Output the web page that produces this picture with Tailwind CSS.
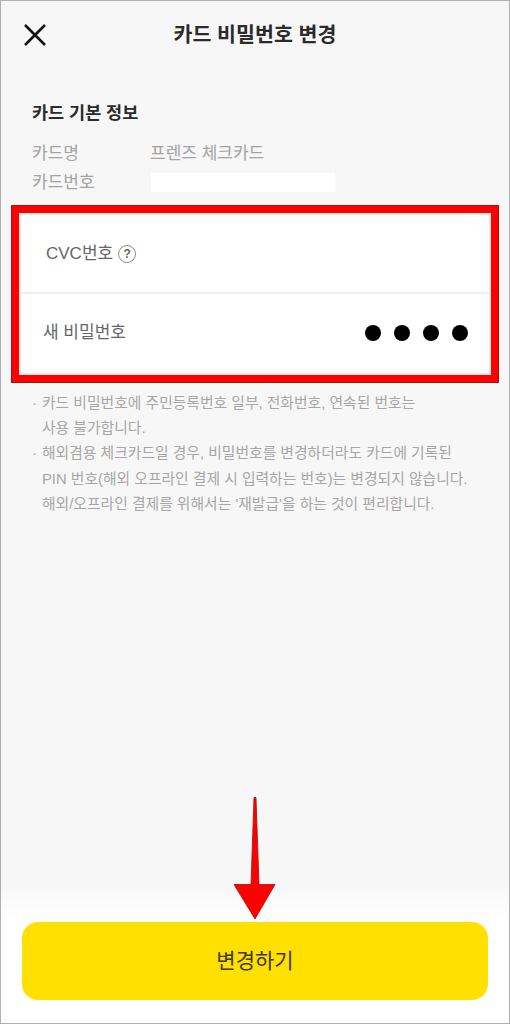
<!DOCTYPE html>
<html lang="ko">
<head>
    <meta charset="utf-8">
    <title>카드 비밀번호 변경</title>
    <script src="https://cdn.jsdelivr.net/npm/@tailwindcss/browser@4"></script>
</head>
<body class="m-0">
    <div class="relative w-[510px] h-[1024px] overflow-hidden flex flex-col border border-[#b0b0b0] bg-[#f7f7f7] font-['Liberation_Sans','Noto_Sans_CJK_KR',sans-serif]">
        <!-- Header -->
        <header class="relative h-[66px] shrink-0 flex items-center justify-center">
            <svg class="absolute left-[23px] top-[23px]" width="22" height="22" viewBox="0 0 22 22" fill="none" stroke="#111" stroke-width="2.6">
                <path d="M1 1L21 21M21 1L1 21"/>
            </svg>
            <h1 class="text-[20.6px] font-bold text-[#2b2b2b] leading-none pt-[2px]">카드 비밀번호 변경</h1>
        </header>

        <!-- Card info -->
        <section class="pl-[31px] pt-[32px] shrink-0">
            <h2 class="text-[17.5px] font-bold text-[#2b2b2b] leading-[28px]">카드 기본 정보</h2>
            <div class="mt-[12px] flex items-center h-[29px] text-[17px] text-[#a3a3a3]">
                <span class="w-[118px]">카드명</span>
                <span>프렌즈 체크카드</span>
            </div>
            <div class="flex items-center h-[29px] text-[17px] text-[#a3a3a3]">
                <span class="w-[119px]">카드번호</span>
                <span class="w-[184px] h-[19px] bg-white"></span>
            </div>
        </section>

        <!-- Inputs -->
        <section class="mx-[10px] mt-[8px] h-[178px] shrink-0 border-[8px] border-[#ff0000] outline outline-1 outline-[#b01010] -outline-offset-1 bg-white">
            <div class="h-full border-2 border-[#e9e9ec] flex flex-col">
                <div class="h-[79px] border-b-2 border-[#f0f0f0] flex items-center pl-[25px] pt-[1px] text-[17px] text-[#666]">
                    <span>CVC번호</span>
                    <span class="ml-[5px] w-[18px] h-[18px] rounded-full border border-[#8a8a8a] flex items-center justify-center text-[12px] leading-none font-bold">?</span>
                </div>
                <div class="flex-1 flex items-center justify-between pl-[22px] pr-[21px] pb-[2px] text-[17px] text-[#666]">
                    <span>새 비밀번호</span>
                    <div class="flex gap-[13px]">
                        <span class="w-[16px] h-[16px] rounded-full bg-black"></span>
                        <span class="w-[16px] h-[16px] rounded-full bg-black"></span>
                        <span class="w-[16px] h-[16px] rounded-full bg-black"></span>
                        <span class="w-[16px] h-[16px] rounded-full bg-black"></span>
                    </div>
                </div>
            </div>
        </section>

        <!-- Notes -->
        <ul class="mt-[8px] pl-[31px] text-[14.8px] leading-[25.2px] text-[#a6a6a6] shrink-0">
            <li class="flex"><span class="w-[10px] shrink-0">·</span><span>카드 비밀번호에 주민등록번호 일부, 전화번호, 연속된 번호는<br>사용 불가합니다.</span></li>
            <li class="flex"><span class="w-[10px] shrink-0">·</span><span class="whitespace-nowrap">해외겸용 체크카드일 경우, 비밀번호를 변경하더라도 카드에 기록된<br>PIN 번호(해외 오프라인 결제 시 입력하는 번호)는 변경되지 않습니다.<br>해외/오프라인 결제를 위해서는 '재발급'을 하는 것이 편리합니다.</span></li>
        </ul>

        <!-- Bottom button -->
        <div class="mt-auto h-[137px] shrink-0 bg-gradient-to-b from-[#f7f7f7] to-white to-[25%] px-[21px] pt-[36px]">
            <button class="w-full h-[78px] rounded-[16px] bg-[#ffe000] text-[21px] text-[#40380c]">변경하기</button>
        </div>

        <!-- Annotation arrow -->
        <svg class="absolute left-[231px] top-[795px]" width="46" height="126" viewBox="0 0 46 126">
            <path d="M22 1.5L24 1.5L27 88.5L43 88.5L23 123L2 88.5L19 88.5Z" fill="#ff0000" stroke="#a01010" stroke-width="0.8"/>
        </svg>
    </div>
</body>
</html>
